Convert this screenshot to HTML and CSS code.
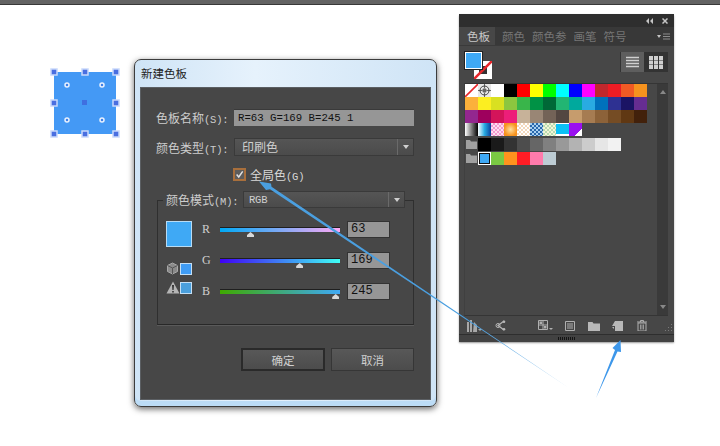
FILE: index.html
```html
<!DOCTYPE html>
<html lang="zh-CN">
<head>
<meta charset="UTF-8">
<title>新建色板</title>
<link rel="stylesheet" href="styles.css">
</head>
<body>

<div class="topbar"></div>

<div class="desktop">

  <svg class="shape" width="76" height="76" viewBox="0 0 76 76">
    <rect x="7" y="7" width="62" height="62" fill="#4499f5"/>
    <g fill="#4a6fe0" stroke="#c9d9fb" stroke-width="1.5">
      <rect x="4" y="4" width="6" height="6"/>
      <rect x="35" y="4" width="6" height="6"/>
      <rect x="66" y="4" width="6" height="6"/>
      <rect x="4" y="35" width="6" height="6"/>
      <rect x="66" y="35" width="6" height="6"/>
      <rect x="4" y="66" width="6" height="6"/>
      <rect x="35" y="66" width="6" height="6"/>
      <rect x="66" y="66" width="6" height="6"/>
    </g>
    <rect x="35" y="35" width="5" height="5" fill="#3f6fe0"/>
    <g fill="#3f80e8" stroke="#e8f1fe" stroke-width="1.5">
      <circle cx="20" cy="20" r="2"/>
      <circle cx="55" cy="20" r="2"/>
      <circle cx="20" cy="55" r="2"/>
      <circle cx="55" cy="55" r="2"/>
    </g>
  </svg>

  <div class="dialog">
    <div class="dialog-title">新建色板</div>
    <div class="dialog-body">
      <div class="row">
        <label class="label">色板名称<span class="mono">(S):</span></label>
        <div class="name-input">R=63 G=169 B=245 1</div>
      </div>
      <div class="row row-type">
        <label class="label">颜色类型<span class="mono">(T):</span></label>
        <div class="select select-type">
          <span class="select-text">印刷色</span>
          <span class="select-arrow"></span>
        </div>
      </div>
      <div class="row row-check">
        <span class="checkbox">
          <svg width="9" height="9" viewBox="0 0 11 11"><path d="M2 5.5 L4.6 8.6 L9.4 1.6" fill="none" stroke="#e2e2e2" stroke-width="1.8"/></svg>
        </span>
        <span class="check-text">全局色<span class="mono">(G)</span></span>
      </div>

      <div class="group">
        <div class="group-head">
          <label class="label">颜色模式<span class="mono">(M):</span></label>
          <div class="select select-mode">
            <span class="select-text mono">RGB</span>
            <span class="select-arrow"></span>
          </div>
        </div>
        <div class="group-main">
          <div class="preview">
            <div class="preview-big"></div>
            <div class="preview-row preview-cube">
              <svg width="13" height="13" viewBox="0 0 13 13">
                <path d="M6.5 1 L11.5 3.5 V9.5 L6.5 12 L1.5 9.5 V3.5 Z" fill="#8a8a8a" stroke="#a8a8a8"/>
                <path d="M1.5 3.5 L6.5 6 L11.5 3.5 M6.5 6 V12" fill="none" stroke="#555"/>
              </svg>
              <span class="preview-small"></span>
            </div>
            <div class="preview-row preview-warn">
              <svg width="14" height="13" viewBox="0 0 14 13">
                <path d="M7 0.5 L13.5 12.5 H0.5 Z" fill="#b5b5b5"/>
                <path d="M6 4 H8 L7.6 9 H6.4 Z M6.2 10 H7.8 V11.6 H6.2 Z" fill="#333"/>
              </svg>
              <span class="preview-small small-web"></span>
            </div>
          </div>
          <div class="sliders">
            <div class="slider-row">
              <span class="slider-name">R</span>
              <div class="track track-r"><span class="thumb thumb-r"></span></div>
              <div class="num">63</div>
            </div>
            <div class="slider-row">
              <span class="slider-name">G</span>
              <div class="track track-g"><span class="thumb thumb-g"></span></div>
              <div class="num">169</div>
            </div>
            <div class="slider-row">
              <span class="slider-name">B</span>
              <div class="track track-b"><span class="thumb thumb-b"></span></div>
              <div class="num">245</div>
            </div>
          </div>
        </div>
      </div>

      <div class="actions">
        <button class="btn btn-default">确定</button>
        <button class="btn">取消</button>
      </div>
    </div>
  </div>

  <div class="panel">
    <div class="panel-top">
      <svg width="7" height="6" viewBox="0 0 7 6"><path d="M3 0 V6 L0 3 Z M7 0 V6 L4 3 Z" fill="#c4c4c4"/></svg>
      <svg width="6" height="6" viewBox="0 0 6 6"><path d="M0.5 0.5 L5.5 5.500 M5.5 0.5 L0.5 5.500" stroke="#c4c4c4" stroke-width="1.5"/></svg>
    </div>
    <div class="tabs">
      <span class="tab tab-active">色板</span>
      <span class="tab">颜色</span>
      <span class="tab">颜色参</span>
      <span class="tab">画笔</span>
      <span class="tab">符号</span>
      <span class="tab-menu">
        <svg width="13" height="7" viewBox="0 0 13 7"><path d="M0 2 H4 L2 5 Z" fill="#c4c4c4"/><path d="M6 1 H13 M6 3.5 H13 M6 6 H13" stroke="#8c8c8c"/></svg>
      </span>
    </div>
    <div class="panel-head">
      <div class="fillstroke">
        <span class="stroke-box"></span>
        <svg class="stroke-slash" width="18" height="18" viewBox="0 0 18 18"><path d="M0 18 L18 0" stroke="#e8262b" stroke-width="2.500"/></svg>
        <span class="fill-box"></span>
      </div>
      <div class="views">
        <span class="view view-on">
          <svg width="13" height="13" viewBox="0 0 13 13"><path d="M0 1.5 H13 M0 4.5 H13 M0 7.5 H13 M0 10.5 H13" stroke="#cfcfcf" stroke-width="1.6"/></svg>
        </span>
        <span class="view">
          <svg width="14" height="13" viewBox="0 0 14 13"><path d="M0 0 H4 V4 H0 Z M5 0 H9 V4 H5 Z M10 0 H14 V4 H10 Z M0 4.500 H4 V8.500 H0 Z M5 4.500 H9 V8.500 H5 Z M10 4.500 H14 V8.500 H10 Z M0 9 H4 V13 H0 Z M5 9 H9 V13 H5 Z M10 9 H14 V13 H10 Z" fill="#cfcfcf"/></svg>
        </span>
      </div>
    </div>

    <div class="list">
      <div class="swatches">
        <div class="sw-row">
          <span class="sw sw-none"><svg width="13" height="13" viewBox="0 0 13 13"><path d="M0 13 L13 0" stroke="#e8262b" stroke-width="1.6"/></svg></span>
          <span class="sw sw-reg"><svg width="13" height="13" viewBox="0 0 13 13"><circle cx="6.5" cy="6.500" r="4.500" fill="none" stroke="#444"/><circle cx="6.5" cy="6.500" r="2.200" fill="#666"/><path d="M6.5 0 V4 M6.5 9 V13 M0 6.500 H4 M9 6.500 H13" stroke="#444" stroke-width="0.800"/></svg></span>
          <span class="sw c-fff"></span><span class="sw c-000"></span><span class="sw c-f00"></span><span class="sw c-ff0"></span><span class="sw c-0f0"></span><span class="sw c-0ff"></span><span class="sw c-00f"></span><span class="sw c-f0f"></span><span class="sw c-c1272d"></span><span class="sw c-ed1c24"></span><span class="sw c-f15a24"></span><span class="sw c-f7931e"></span>
        </div>
        <div class="sw-row">
          <span class="sw c-fbb03b"></span><span class="sw c-fcee21"></span><span class="sw c-d9e021"></span><span class="sw c-8cc63f"></span><span class="sw c-39b54a"></span><span class="sw c-009245"></span><span class="sw c-006837"></span><span class="sw c-22b573"></span><span class="sw c-00a99d"></span><span class="sw c-29abe2"></span><span class="sw c-0071bc"></span><span class="sw c-2e3192"></span><span class="sw c-1b1464"></span><span class="sw c-662d91"></span>
        </div>
        <div class="sw-row">
          <span class="sw c-93278f"></span><span class="sw c-9e005d"></span><span class="sw c-d4145a"></span><span class="sw c-ed1e79"></span><span class="sw c-c7b299"></span><span class="sw c-998675"></span><span class="sw c-736357"></span><span class="sw c-534741"></span><span class="sw c-c69c6d"></span><span class="sw c-a67c52"></span><span class="sw c-8c6239"></span><span class="sw c-754c24"></span><span class="sw c-603813"></span><span class="sw c-42210b"></span>
        </div>
        <div class="sw-row">
          <span class="sw g-gray"></span><span class="sw g-blue"></span><span class="sw p-pink"></span><span class="sw g-orange"></span><span class="sw p-dots"></span><span class="sw p-blue"></span><span class="sw p-green"></span><span class="sw g-cyan"></span><span class="sw g-purple"></span>
        </div>
        <div class="sw-row sw-row-group">
          <span class="sw sw-folder"><svg width="11" height="9" viewBox="0 0 11 9"><path d="M0 0 H4 L5 1.500 H11 V9 H0 Z" fill="#a0a0a0"/></svg></span>
          <span class="sw c-000"></span><span class="sw c-1a1a1a"></span><span class="sw c-333"></span><span class="sw c-4d4d4d"></span><span class="sw c-666"></span><span class="sw c-808080"></span><span class="sw c-999"></span><span class="sw c-b3b3b3"></span><span class="sw c-ccc"></span><span class="sw c-e6e6e6"></span><span class="sw c-f2f2f2"></span>
        </div>
        <div class="sw-row sw-row-group">
          <span class="sw sw-folder"><svg width="11" height="9" viewBox="0 0 11 9"><path d="M0 0 H4 L5 1.500 H11 V9 H0 Z" fill="#a0a0a0"/></svg></span>
          <span class="sw sw-selected"></span><span class="sw c-7ac943"></span><span class="sw c-ff931e"></span><span class="sw c-ff1d25"></span><span class="sw c-ff7bac"></span><span class="sw c-bdccd4"></span>
        </div>
      </div>
      <div class="scrollbar">
        <span class="scroll-up"></span>
        <span class="scroll-down"></span>
      </div>
    </div>

    <div class="toolbar">
      <svg class="tool-lib" width="16" height="12" viewBox="0 0 16 12"><path d="M1 12 V2 H3 V12 Z M4 12 V0 H6 V12 Z M7 12 L8 2 L11 5 V12 Z" fill="#a8a8a8"/><path d="M12 9 H16 L14 11 Z" fill="#a8a8a8"/></svg>
      <svg class="tool-link" width="11" height="11" viewBox="0 0 11 11"><path d="M9 1 L3 5.500 L9 10" fill="none" stroke="#b8b8b8" stroke-width="1.200"/><circle cx="3" cy="5.500" r="2" fill="none" stroke="#b8b8b8"/><circle cx="9" cy="1.800" r="1.300" fill="#b8b8b8"/><circle cx="9" cy="9.200" r="1.300" fill="#b8b8b8"/></svg>
      <svg class="tool-show" width="15" height="11" viewBox="0 0 15 11"><path d="M0.500 0.500 H9.500 V9.500 H0.500 Z M0.500 5 H9.500 M5 0.500 V9.500" fill="none" stroke="#b0b0b0"/><path d="M1.500 1.500 H4 V4 H1.500 Z M6 6 H8.500 V8.500 H6 Z" fill="#b0b0b0"/><path d="M11 8 H15 L13 10 Z" fill="#b0b0b0"/></svg>
      <svg class="tool-opts" width="10" height="10" viewBox="0 0 10 10"><path d="M0.500 0.500 H9.500 V9.500 H0.500 Z M2 3 H8 M2 5 H8 M2 7 H8" fill="none" stroke="#b0b0b0"/></svg>
      <svg class="tool-folder" width="12" height="9" viewBox="0 0 12 9"><path d="M0 0 H4.500 L5.500 1.500 H12 V9 H0 Z" fill="#b8b8b8"/></svg>
      <svg class="tool-new" width="11" height="10" viewBox="0 0 11 10"><path d="M3 0 H11 V10 H3 V5 H0 Z" fill="#b8b8b8"/><path d="M0 6 H2 V8 Z" fill="#b8b8b8"/></svg>
      <svg class="tool-trash" width="10" height="11" viewBox="0 0 10 11"><path d="M0 2 H10 M3.500 2 V0.500 H6.500 V2" fill="none" stroke="#b0b0b0"/><path d="M1 3 H9 V11 H1 Z" fill="none" stroke="#b0b0b0"/><path d="M3.500 4.500 V9.500 M5 4.500 V9.500 M6.500 4.500 V9.500" stroke="#b0b0b0" stroke-width="0.800"/></svg>
      <svg class="tool-grip" width="9" height="9" viewBox="0 0 9 9"><path d="M8 0 V1 H7 V0 Z M8 3 V4 H7 V3 Z M5 3 V4 H4 V3 Z M8 6 V7 H7 V6 Z M5 6 V7 H4 V6 Z M2 6 V7 H1 V6 Z" fill="#7a7a7a"/></svg>
    </div>
    <div class="panel-foot"><span class="foot-grip"></span></div>
  </div>

  <svg class="arrows" width="720" height="441" viewBox="0 0 720 441">
    <defs>
      <linearGradient id="arrow-fade" gradientUnits="userSpaceOnUse" x1="259" y1="176" x2="567" y2="382">
        <stop offset="0.7" stop-color="#4a9fe0"/>
        <stop offset="1" stop-color="#a8d0f0"/>
      </linearGradient>
    </defs>
    <path d="M567.500 382 L270 184.300 L266 185 L259 176.500 L271 178.500 L271.500 181.800 Z" fill="url(#arrow-fade)"/>
    <path d="M596 393 L617.500 346.500 L621 347 L620.500 335 L612.500 343 L615 345 Z" fill="#3d97ea"/>
  </svg>

</div>

</body>
</html>
```

FILE: styles.css
```css
body {
  margin: 0;
  background-color: #fff;
  font-family: "Noto Sans CJK SC", "Liberation Sans", sans-serif;
  font-size: 12px;
  overflow: hidden;
}
.mono {
  font-family: "Liberation Mono", "Noto Sans CJK SC", monospace;
  font-size: 10.5px;
  letter-spacing: -0.2px;
}
.topbar {
  height: 5px;
  background-color: #636363;
  border-bottom: 1px solid #383838;
  box-sizing: border-box;
}
.desktop {
  position: relative;
  height: 441px;
}

/* artwork on the canvas */
.shape {
  position: absolute;
  left: 47px;
  top: 60px;
}
.arrows {
  position: absolute;
  left: 0;
  top: 0;
  pointer-events: none;
}

/* dialog */
.dialog {
  position: absolute;
  left: 134px;
  top: 54px;
  width: 303px;
  height: 348px;
  box-sizing: border-box;
  padding: 0 5px 6px;
  display: flex;
  flex-direction: column;
  border: 1px solid #3c3c3c;
  border-radius: 7px;
  background: linear-gradient(90deg, #cfe4f6, #e6f2fc 40%, #cfe4f6);
  box-shadow: 0 2px 6px rgba(0,0,0,0.6), inset 0 -5px 0 #bcdcf6;
}
.dialog-title {
  height: 27px;
  line-height: 27px;
  padding-left: 1px;
  color: #222;
  font-size: 11.5px;
}
.dialog-body {
  flex: 1;
  box-sizing: border-box;
  padding: 21px 16px 0 15px;
  background-color: #474747;
  border: 1px solid #5b5f63;
  color: #cdcdcd;
}
.row {
  display: flex;
  align-items: center;
  height: 17px;
}
.row-type {
  margin-top: 12px;
  height: 18px;
}
.row-check {
  margin-top: 12px;
  padding-left: 77px;
  height: 13px;
}
.label {
  width: 78px;
  flex: none;
  white-space: nowrap;
}
.name-input {
  flex: 1;
  height: 16px;
  line-height: 16px;
  padding-left: 4px;
  background-color: #969696;
  border-top: 1px solid #3a3a3a;
  color: #111;
  font-family: "Liberation Mono", monospace;
  font-size: 10.7px;
}
.select {
  display: flex;
  align-items: center;
  height: 18px;
  box-sizing: border-box;
  background: linear-gradient(#555, #4b4b4b);
  border: 1px solid #3a3a3a;
  color: #d0d0d0;
}
.select-type {
  flex: 1;
}
.select-text {
  flex: 1;
  padding-left: 7px;
  line-height: 16px;
}
.select-arrow {
  width: 16px;
  height: 100%;
  box-sizing: border-box;
  border-left: 1px solid #6a6a6a;
  display: flex;
  align-items: center;
  justify-content: center;
}
.select-arrow::after {
  content: "";
  border-left: 3px solid transparent;
  border-right: 3px solid transparent;
  border-top: 4px solid #d0d0d0;
}
.checkbox {
  width: 9px;
  height: 9px;
  flex: none;
  border: 2px solid #a86f3c;
  background-color: #5c5c5c;
  display: flex;
}
.check-text {
  margin-left: 4px;
  color: #d8d8d8;
  white-space: nowrap;
}

/* colour mode group */
.group {
  margin: 19px 0 0 1px;
  height: 125px;
  box-sizing: border-box;
  border: 1px solid #2f2f2f;
  border-bottom-color: #282828;
  box-shadow: 0 1px 0 #5a5a5a;
}
.group-head {
  display: flex;
  align-items: center;
  height: 17px;
  margin: -10px 8px 0 5px;
  padding-left: 3px;
  background-color: #474747;
}
.group-head .label {
  width: 77px;
}
.select-mode {
  flex: 1;
  height: 17px;
}
.select-mode .select-text {
  padding-left: 5px;
}
.group-main {
  display: flex;
  padding: 13px 0 0 8px;
}
.preview {
  width: 26px;
  flex: none;
}
.preview-big {
  width: 26px;
  height: 26px;
  box-sizing: border-box;
  background-color: #3fa9f5;
  border: 1px solid #b8dcf5;
}
.preview-row {
  display: flex;
  align-items: center;
  justify-content: space-between;
  height: 13px;
}
.preview-cube {
  margin-top: 15px;
}
.preview-warn {
  margin-top: 6px;
}
.preview-small {
  width: 12px;
  height: 12px;
  flex: none;
  box-sizing: border-box;
  background-color: #3f9cf5;
  border: 1px solid #c4dff5;
}
.small-web {
  background-color: #4a9fdc;
}
.sliders {
  display: flex;
  flex-direction: column;
  gap: 14px;
  margin-left: 10px;
}
.slider-row {
  display: flex;
  align-items: center;
  height: 17px;
}
.slider-name {
  width: 18px;
  color: #cfcfcf;
  font-family: "Liberation Serif", serif;
  font-size: 12px;
}
.track {
  position: relative;
  width: 120px;
  height: 4px;
  border-top: 1px solid #1f1f1f;
}
.track-r {
  background: linear-gradient(90deg, #00a9f5, #ffa9f5);
}
.track-g {
  background: linear-gradient(90deg, #3f00f5, #3ffff5);
}
.track-b {
  background: linear-gradient(90deg, #3fa900, #3fa9f5);
}
.thumb {
  position: absolute;
  top: 4px;
  width: 7px;
  height: 5px;
  margin-left: -3px;
  background-color: #d8d8d8;
  clip-path: polygon(50% 0, 100% 60%, 100% 100%, 0 100%, 0 60%);
}
.thumb-r {
  left: 25%;
}
.thumb-g {
  left: 66%;
}
.thumb-b {
  left: 96%;
}
.num {
  width: 43px;
  height: 17px;
  margin-left: 7px;
  box-sizing: border-box;
  line-height: 15px;
  padding-left: 3px;
  background-color: #969696;
  border: 1px solid #333;
  color: #111;
  font-family: "Liberation Mono", monospace;
  font-size: 12px;
}
.actions {
  display: flex;
  justify-content: flex-end;
  gap: 6px;
  margin-top: 23px;
}
.btn {
  width: 83px;
  height: 23px;
  padding: 0;
  background: linear-gradient(#585858, #4c4c4c);
  border: 1px solid #363636;
  color: #d0d0d0;
  font-family: inherit;
  font-size: 11.5px;
}
.btn-default {
  width: 84px;
  border: 2px solid #2a2a2a;
}

/* swatches panel */
.panel {
  position: absolute;
  left: 459px;
  top: 9px;
  width: 215px;
  height: 328px;
  box-sizing: border-box;
  display: flex;
  flex-direction: column;
  background-color: #474747;
  border-radius: 2px 2px 0 0;
  box-shadow: 0 1px 2px rgba(0,0,0,0.4);
}
.panel-top {
  height: 13px;
  flex: none;
  display: flex;
  align-items: center;
  justify-content: flex-end;
  gap: 9px;
  padding-right: 6px;
  background-color: #2e2e2e;
}
.tabs {
  height: 18px;
  flex: none;
  display: flex;
  align-items: center;
  background-color: #383838;
  border-bottom: 1px solid #3a3a3a;
}
.tab {
  height: 100%;
  line-height: 18px;
  margin-left: 7px;
  color: #767676;
  font-size: 11.5px;
  white-space: nowrap;
}
.tab-active {
  width: 36px;
  box-sizing: border-box;
  margin-left: 0;
  padding-left: 8px;
  background-color: #474747;
  color: #c8c8c8;
}
.tab-menu {
  margin-left: auto;
  margin-right: 4px;
  display: flex;
}
.panel-head {
  height: 37px;
  flex: none;
  display: flex;
  justify-content: space-between;
  padding: 6px 6px 0;
  box-sizing: border-box;
}
.fillstroke {
  position: relative;
  width: 27px;
  height: 27px;
}
.fill-box {
  position: absolute;
  left: 0;
  top: 0;
  width: 17px;
  height: 17px;
  box-sizing: border-box;
  background-color: #3fa9f5;
  border: 1px solid #fff;
  box-shadow: 0 0 0 1px #222;
}
.stroke-box {
  position: absolute;
  left: 9px;
  top: 9px;
  width: 18px;
  height: 18px;
  box-sizing: border-box;
  background-color: #333;
  border: 5px solid #fff;
}
.stroke-slash {
  position: absolute;
  left: 9px;
  top: 9px;
}
.views {
  display: flex;
  height: 20px;
  background-color: #333;
  padding: 0 1px;
}
.view {
  width: 23px;
  display: flex;
  align-items: center;
  justify-content: center;
}
.view-on {
  background-color: #5e5e5e;
}
.list {
  height: 233px;
  flex: none;
  display: flex;
  margin: 0 6px 0 5px;
  border-top: 1px solid #353535;
  border-left: 1px solid #404040;
  border-bottom: 1px solid #353535;
  box-sizing: border-box;
}
.swatches {
  flex: 1;
}
.sw-row {
  display: flex;
  height: 13px;
}
.sw-row-group {
  margin-top: 1.500px;
}
.sw {
  width: 13px;
  height: 13px;
  flex: none;
  box-sizing: border-box;
  display: block;
}
.sw svg {
  display: block;
}
.sw-none {
  background-color: #fff;
}
.sw-reg {
  background-color: #e8e8e8;
}
.sw-folder {
  display: flex;
  align-items: center;
  justify-content: center;
}
.sw-selected {
  background-color: #3fa9f5;
  border: 2px solid #111;
  outline: 1px solid #fff;
  outline-offset: -1px;
}
.scrollbar {
  width: 11px;
  flex: none;
  display: flex;
  flex-direction: column;
  justify-content: space-between;
  align-items: center;
  padding: 6px 0;
  background-color: #3a3a3a;
}
.scroll-up {
  border-left: 3.500px solid transparent;
  border-right: 3.500px solid transparent;
  border-bottom: 4px solid #888;
}
.scroll-down {
  border-left: 3.500px solid transparent;
  border-right: 3.500px solid transparent;
  border-top: 4px solid #888;
}
.toolbar {
  position: relative;
  height: 18px;
  flex: none;
}
.toolbar svg {
  position: absolute;
}
.tool-lib { left: 7px; top: 4px; }
.tool-link { left: 36px; top: 4px; }
.tool-show { left: 79px; top: 4px; }
.tool-opts { left: 106px; top: 5px; }
.tool-folder { left: 129px; top: 6px; }
.tool-new { left: 153px; top: 5px; }
.tool-trash { left: 178px; top: 4px; }
.tool-grip { left: 205px; top: 8px; }
.panel-foot {
  flex: 1;
  display: flex;
  align-items: center;
  justify-content: center;
  border-top: 1px solid #2e2e2e;
  background-color: #424242;
}
.foot-grip {
  width: 18px;
  height: 3px;
  background: repeating-linear-gradient(90deg, #141414 0 1px, transparent 1px 2px);
}

/* swatch colours */
.c-fff { background: #fff; }
.c-000 { background: #000; }
.c-f00 { background: #f00; }
.c-ff0 { background: #ff0; }
.c-0f0 { background: #0f0; }
.c-0ff { background: #0ff; }
.c-00f { background: #00f; }
.c-f0f { background: #f0f; }
.c-c1272d { background: #c1272d; }
.c-ed1c24 { background: #ed1c24; }
.c-f15a24 { background: #f15a24; }
.c-f7931e { background: #f7931e; }
.c-fbb03b { background: #fbb03b; }
.c-fcee21 { background: #fcee21; }
.c-d9e021 { background: #d9e021; }
.c-8cc63f { background: #8cc63f; }
.c-39b54a { background: #39b54a; }
.c-009245 { background: #009245; }
.c-006837 { background: #006837; }
.c-22b573 { background: #22b573; }
.c-00a99d { background: #00a99d; }
.c-29abe2 { background: #29abe2; }
.c-0071bc { background: #0071bc; }
.c-2e3192 { background: #2e3192; }
.c-1b1464 { background: #1b1464; }
.c-662d91 { background: #662d91; }
.c-93278f { background: #93278f; }
.c-9e005d { background: #9e005d; }
.c-d4145a { background: #d4145a; }
.c-ed1e79 { background: #ed1e79; }
.c-c7b299 { background: #c7b299; }
.c-998675 { background: #998675; }
.c-736357 { background: #736357; }
.c-534741 { background: #534741; }
.c-c69c6d { background: #c69c6d; }
.c-a67c52 { background: #a67c52; }
.c-8c6239 { background: #8c6239; }
.c-754c24 { background: #754c24; }
.c-603813 { background: #603813; }
.c-42210b { background: #42210b; }
.c-1a1a1a { background: #1a1a1a; }
.c-333 { background: #333; }
.c-4d4d4d { background: #4d4d4d; }
.c-666 { background: #666; }
.c-808080 { background: #808080; }
.c-999 { background: #999; }
.c-b3b3b3 { background: #b3b3b3; }
.c-ccc { background: #ccc; }
.c-e6e6e6 { background: #e6e6e6; }
.c-f2f2f2 { background: #f2f2f2; }
.c-7ac943 { background: #7ac943; }
.c-ff931e { background: #ff931e; }
.c-ff1d25 { background: #ff1d25; }
.c-ff7bac { background: #ff7bac; }
.c-bdccd4 { background: #bdccd4; }

/* gradient and pattern swatches */
.g-gray { background: linear-gradient(90deg, #fff, #000); }
.g-blue { background: linear-gradient(90deg, #fff, #29abe2 50%, #0a3f9c); }
.g-orange { background: radial-gradient(circle, #ffe0a0, #f7931e 70%); }
.g-cyan { background: #0cc0f5; border-top: 1px solid #fff; border-bottom: 2px solid #fff; }
.g-purple { background: linear-gradient(135deg, #9a10f0 70%, #fff 70%); }
.p-pink { background: repeating-conic-gradient(#f49ad0 0 25%, #fde0ee 0 50%) 0 0 / 4px 4px; }
.p-dots { background: repeating-conic-gradient(#f3d8bc 0 25%, #fff 0 50%) 0 0 / 4px 4px; }
.p-blue { background: repeating-conic-gradient(#2a68ac 0 25%, #a8d0f0 0 50%) 0 0 / 4px 4px; }
.p-green { background: repeating-conic-gradient(#b8dcb0 0 25%, #f4f4d8 0 50%) 0 0 / 4px 4px; }
```
